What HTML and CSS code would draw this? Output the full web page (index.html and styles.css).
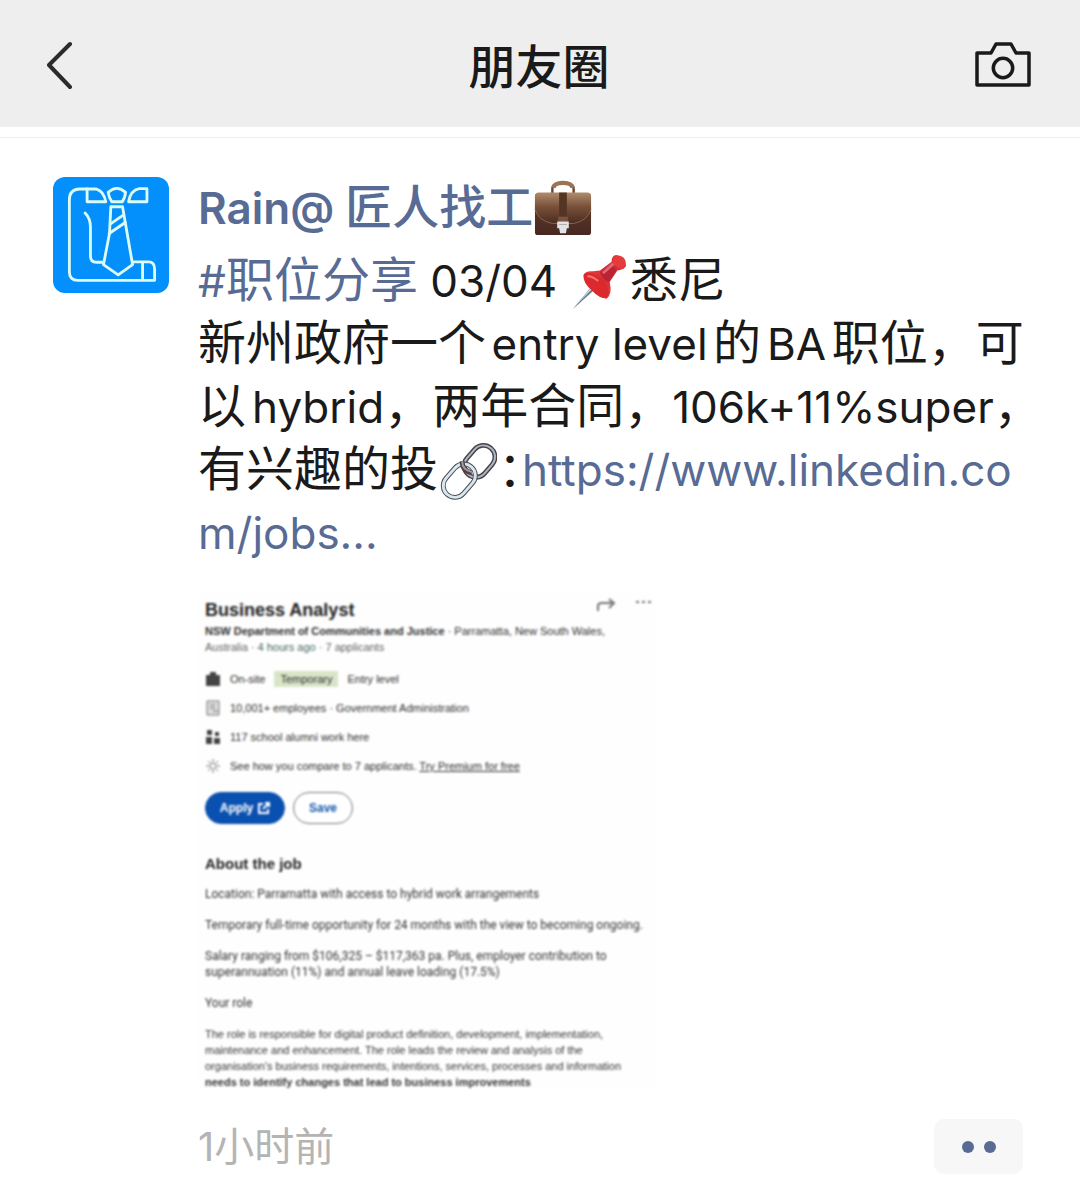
FILE: index.html
```html
<!DOCTYPE html>
<html lang="zh-CN">
<head>
<meta charset="utf-8">
<meta name="viewport" content="width=device-width, initial-scale=1">
<title>朋友圈</title>
<link rel="stylesheet" href="styles.css">
</head>
<body>
<header class="topbar">
  <button class="icon-button" type="button" aria-label="返回">
    <svg width="28" height="48" viewBox="0 0 28 48" fill="none" stroke="#2b2b2b" stroke-width="4" stroke-linecap="round" stroke-linejoin="round"><path d="M24 3 3 24l21 22"/></svg>
  </button>
  <h1 class="topbar-title">朋友圈</h1>
  <button class="icon-button" type="button" aria-label="拍照">
    <svg width="58" height="46" viewBox="0 0 58 46" fill="none" stroke="#1a1a1a" stroke-width="3.500" stroke-linejoin="round"><path d="M3 11h14l5-9h15l5 9h13v32H3z"/><circle cx="29" cy="26" r="9.700"/></svg>
  </button>
</header>
<main class="feed">
  <article class="post">
    <svg class="avatar" viewBox="38 36 347 347" role="img" aria-label="头像">
      <rect x="38" y="36" width="347" height="347" fill="#0390fc"/>
      <g fill="none" stroke="#dcfbf2" stroke-width="8.500" stroke-linejoin="round" stroke-linecap="round">
        <path d="M140 72h-23q-30 2-30 32v216q0 25 25 25h230v-33q0-22-18-22h-46M306 290v55"/>
        <path d="M140 72h28q22 6 28 38h-56z"/>
        <path d="M203 82q26-24 52 0-2 18-10 28h-31q-8-10-11-28z"/>
        <path d="M319 71v39h-55q6-34 32-39z"/>
        <path d="M211 125h35l30 173-43 31-44-31 18-93z"/>
        <path d="M209 177l39-27M206 205l48-33"/>
        <path d="M134 144q16 16 16 42v86q0 19 18 19h21"/>
      </g>
    </svg>
    <div class="content">
      <h2 class="author"><a href="#profile"><span class="latin">Rain@ </span>匠人找工</a><svg class="emoji" viewBox="0 0 60 60" role="img" aria-label="公文包">
        <defs>
          <linearGradient id="leather" x1="0" y1="0" x2="0" y2="1"><stop offset="0" stop-color="#b08c6e"/><stop offset=".45" stop-color="#795139"/><stop offset="1" stop-color="#4b2c22"/></linearGradient>
          <linearGradient id="base" x1="0" y1="0" x2="0" y2="1"><stop offset="0" stop-color="#63402f"/><stop offset="1" stop-color="#472820"/></linearGradient>
        </defs>
        <path d="M19 15V9q0-5 6-5h10q6 0 6 5v6" fill="none" stroke="#684632" stroke-width="2.500"/>
        <path d="M20 8q1-5 10-5t10 5" fill="none" stroke="#9b7356" stroke-width="4.500"/>
        <rect x="1" y="14" width="58" height="43" rx="3" fill="url(#base)"/>
        <path d="M1 17q0-4 4-4h50q4 0 4 4v13q-3 12-18 15H19Q4 42 1 30z" fill="url(#leather)"/>
        <path d="M1 30q3 12 18 15h22q15-3 18-15" fill="none" stroke="#8c634d" stroke-width="1"/>
        <path d="M26 13h8v28h-8z" fill="#543524"/><path d="M25 38h10v5H25z" fill="#79543f"/>
        <path d="M24 43h12v7h-2l-1 5h-6l-1-5h-2z" fill="#e4e2e6"/><path d="M26 46h8" stroke="#aaa" stroke-width="1"/>
      </svg></h2>
      <p class="message"><a class="topic" href="#topic"><span class="latin">#</span>职位分享</a><span class="latin"> 03/04 </span><svg class="emoji" viewBox="0 0 60 60" role="img" aria-label="图钉">
        <defs><linearGradient id="pin" x1="0" y1="0" x2="1" y2="1"><stop offset="0" stop-color="#f25450"/><stop offset=".5" stop-color="#d52b30"/><stop offset="1" stop-color="#eb4a48"/></linearGradient></defs>
        <path d="M2 58 25 30l4 4z" fill="#6b7d8c"/><path d="M4 55 25 31l2 1z" fill="#c8e1ed"/>
        <path d="M13 23q2-5 10-4l7-1L42 9q0-7 5-7 9 2 10 11-1 4-9 5l-8 12q3 13-3 17-8 0-15-8-10-8-9-16z" fill="url(#pin)"/>
        <path d="M13 23q1-4 9-2 8 4 14 11 5 9 1 15-9-1-15-9-9-8-9-15z" fill="#dc292d"/>
        <path d="M17 24q6 0 11 5" fill="none" stroke="#f57872" stroke-width="2"/>
        <path d="M30 20q4 8 9 10l8-12-5-7z" fill="#b92333"/><path d="M33 21 44 11" stroke="#df6672" stroke-width="3"/>
        <ellipse cx="50" cy="9" rx="7" ry="6" transform="rotate(45 50 9)" fill="#e63b3b"/>
      </svg>悉尼<br>
      新州政府一个<span class="latin">entry level</span>的<span class="latin">BA</span>职位，可以<span class="latin">hybrid</span>，两年合同，<span class="latin">106k+11%super</span>，有兴趣的投<svg class="emoji" viewBox="0 0 60 60" role="img" aria-label="链接">
        <g fill="none">
          <rect x="24" y="8" width="36" height="24" rx="12" transform="rotate(-49 42 20)" stroke="#4d4244" stroke-width="5"/>
          <rect x="24" y="8" width="36" height="24" rx="12" transform="rotate(-49 42 20)" stroke="#a6b9cd" stroke-width="2"/>
          <rect x="2" y="28" width="38" height="24" rx="12" transform="rotate(-49 21 40)" stroke="#4b4c50" stroke-width="5"/>
          <rect x="2" y="28" width="38" height="24" rx="12" transform="rotate(-49 21 40)" stroke="#d7e7f2" stroke-width="3"/>
          <path d="M24 20q0 10 10 12" stroke="#4d4244" stroke-width="5"/><path d="M24 20q0 9 10 11" stroke="#a99da2" stroke-width="2"/>
        </g>
      </svg><span class="colon">：</span><a class="latin" href="#job">https://www.linkedin.com/jobs...</a></p>
      <section class="shot" aria-label="Business Analyst">
        <div class="shot-head">
          <h3 class="job-title">Business Analyst</h3>
          <svg width="56" height="16" viewBox="0 0 56 16" fill="none" stroke="#777" stroke-width="2"><path d="M2 14V9q0-3 4-3h11M13 2l5 4-5 5"/><path d="M40 5h3M46 5h3M52 5h3"/></svg>
        </div>
        <p class="company"><b>NSW Department of Communities and Justice</b> · Parramatta, New South Wales,<br><span class="muted">Australia · <span class="fresh">4 hours ago</span> · 7 applicants</span></p>
        <ul class="facts">
          <li><svg class="fact-icon" viewBox="0 0 16 16"><path d="M1 4h4V1h6v3h4v11H1z" fill="#444"/></svg><span>On-site</span><span class="tag">Temporary</span><span>Entry level</span></li>
          <li><svg class="fact-icon" viewBox="0 0 16 16" fill="#ddd" stroke="#777"><path d="M2 1h12v14H2zM5 5h5M5 8h5M8 11h5"/></svg><span>10,001+ employees · Government Administration</span></li>
          <li><svg class="fact-icon" viewBox="0 0 16 16" fill="#444"><path d="M2 1h5v5H2zM1 8h6v7H1zM10 3h4v4h-4zM9 9h6v6H9z"/></svg><span>117 school alumni work here</span></li>
          <li><svg class="fact-icon" viewBox="0 0 16 16" fill="none" stroke="#777"><circle cx="8" cy="8" r="3"/><path d="M8 1v3M8 12v3M1 8h3M12 8h3M3 3l2 2M11 11l2 2M3 13l2-2M11 5l2-2"/></svg><span>See how you compare to 7 applicants. <a href="#premium">Try Premium for free</a></span></li>
        </ul>
        <div class="actions">
          <button class="pill pill-primary" type="button">Apply <svg width="12" height="12" viewBox="0 0 12 12" fill="none" stroke="#fff" stroke-width="2"><path d="M5 2H1v9h9V7M7 1h4v4M11 1 5 7"/></svg></button>
          <button class="pill" type="button">Save</button>
        </div>
        <h3 class="about">About the job</h3>
        <div class="details">
          <p>Location: Parramatta with access to hybrid work arrangements</p>
          <p>Temporary full-time opportunity for 24 months with the view to becoming ongoing.</p>
          <p>Salary ranging from $106,325 – $117,363 pa. Plus, employer contribution to<br>superannuation (11%) and annual leave loading (17.5%)</p>
          <p>Your role</p>
          <p class="role">The role is responsible for digital product definition, development, implementation,<br>maintenance and enhancement. The role leads the review and analysis of the<br>organisation's business requirements, intentions, services, processes and information<br><b>needs to identify changes that lead to business improvements</b></p>
        </div>
      </section>
      <footer class="post-footer">
        <time class="time">1小时前</time>
        <button class="more" type="button" aria-label="评论"><span class="dot"></span><span class="dot"></span></button>
      </footer>
    </div>
  </article>
</main>
</body>
</html>
```
FILE: styles.css
```css
* { box-sizing: border-box; }
body {
  margin: 0;
  background: #fff;
  color: #1a1a1a;
  font-family: Inter, "Noto Sans CJK SC", sans-serif;
}
h1, h2, h3, p, ul { margin: 0; padding: 0; }
ul { list-style: none; }
button { font: inherit; border: 0; padding: 0; cursor: pointer; }
svg { display: block; }
a { color: #576b95; text-decoration: none; }

.topbar {
  display: grid;
  grid-template-columns: 60px 1fr 60px;
  align-items: center;
  height: 127px;
  padding: 3px 48px 0 46px;
  background: #eee;
}
.icon-button { background: none; }
.icon-button:last-child { justify-self: end; }
.topbar-title {
  padding-top: 4px;
  text-align: center;
  font-size: 47px;
  line-height: 64px;
  font-weight: 500;
}
.feed { margin-top: 10px; border-top: 1px solid #ededed; }
.post {
  display: flex;
  gap: 29px;
  padding: 37px 57px 19px 53px;
}
.avatar {
  flex: none;
  width: 116px;
  height: 116px;
  margin-top: 2px;
  border-radius: 12px;
}
.content { flex: 1; min-width: 0; }
.latin { font-size: 44px; }
.emoji {
  display: inline-block;
  width: 58px;
  height: 58px;
  margin: -4px 1px;
  vertical-align: -10px;
}
.author {
  font-size: 47px;
  line-height: 64px;
  font-weight: 500;
}
.author .latin { font-weight: 600; }
.message {
  margin: 8px -28px 0 0;
  font-size: 48px;
  line-height: 63px;
  word-break: break-all;
  text-autospace: normal;
}
.message .latin { line-height: 1; }
.topic { text-autospace: no-autospace; }
.colon { font-feature-settings: "halt"; }

.shot {
  width: 457px;
  max-width: 100%;
  height: 495px;
  margin-top: 30px;
  padding: 4px 3px 0 7px;
  background: #fefefe;
  color: #333;
  font-family: "Liberation Sans", sans-serif;
  font-size: 11px;
  line-height: 16px;
  white-space: nowrap;
  filter: blur(1px);
}
.shot-head { display: flex; justify-content: space-between; }
.job-title { font-size: 18px; line-height: 26px; color: #222; }
.muted { color: #666; }
.fresh { color: #476b62; }
.facts { display: grid; gap: 13px; margin-top: 16px; }
.facts li { display: flex; align-items: center; gap: 9px; }
.facts a { color: inherit; text-decoration: underline; }
.fact-icon { width: 16px; height: 16px; }
.tag { padding: 0 6px; background: #d9e5c8; }
.actions { display: flex; gap: 8px; margin-top: 18px; }
.pill {
  display: flex;
  align-items: center;
  justify-content: center;
  gap: 5px;
  width: 60px;
  height: 32px;
  border: 1px solid #777;
  border-radius: 16px;
  background: #fff;
  color: #1557a8;
  font-weight: 700;
  font-size: 12px;
}
.pill-primary { width: 80px; border-color: #0a50b0; background: #0a50b0; color: #fff; }
.about { margin-top: 30px; font-size: 15px; line-height: 20px; color: #222; }
.details {
  display: grid;
  gap: 15px;
  margin-top: 12px;
  font-family: Roboto, "Liberation Sans", sans-serif;
  font-size: 12px;
}
.role { font-family: "Liberation Sans", sans-serif; font-size: 11px; }

.post-footer {
  display: flex;
  align-items: center;
  justify-content: space-between;
  margin-top: 31px;
}
.time { font-size: 40px; line-height: 55px; color: #b4b4b4; }
.more {
  display: flex;
  align-items: center;
  justify-content: center;
  gap: 10px;
  width: 89px;
  height: 55px;
  border-radius: 10px;
  background: #f7f7f7;
}
.dot { width: 12px; height: 12px; border-radius: 50%; background: #576b95; }
```
